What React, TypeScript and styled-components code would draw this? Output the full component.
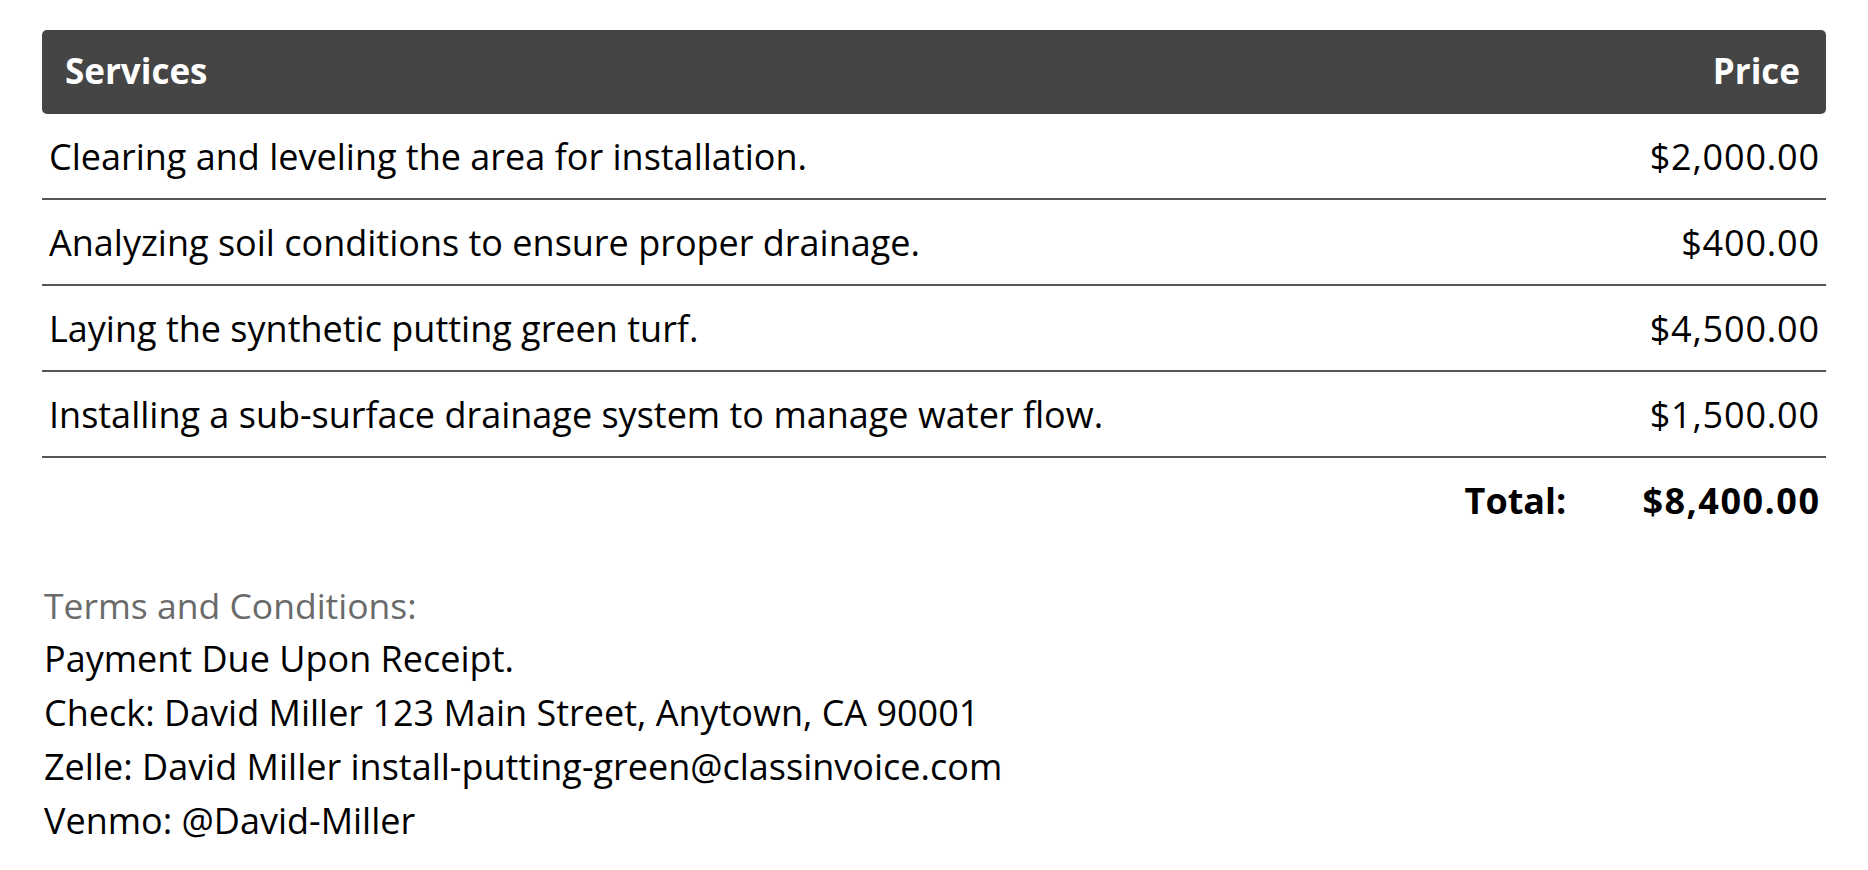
import React from "react";
import styled, { createGlobalStyle } from "styled-components";

const GlobalStyle = createGlobalStyle`
  html, body {
    margin: 0;
    padding: 0;
    background: #fff;
  }
  body {
    font-family: "Open Sans", "Noto Sans", sans-serif;
    color: #000;
  }
`;

interface ServiceItem {
  description: string;
  price: string;
}

const services: ServiceItem[] = [
  { description: "Clearing and leveling the area for installation.", price: "$2,000.00" },
  { description: "Analyzing soil conditions to ensure proper drainage.", price: "$400.00" },
  { description: "Laying the synthetic putting green turf.", price: "$4,500.00" },
  { description: "Installing a sub-surface drainage system to manage water flow.", price: "$1,500.00" },
];

const terms = [
  "Payment Due Upon Receipt.",
  "Check: David Miller 123 Main Street, Anytown, CA 90001",
  "Zelle: David Miller install-putting-green@classinvoice.com",
  "Venmo: @David-Miller",
];

export default function App() {
  return (
    <>
      <GlobalStyle />
      <Page>
        <Table>
          <HeaderRow>
            <HeaderCell>Services</HeaderCell>
            <HeaderCell>Price</HeaderCell>
          </HeaderRow>
          {services.map((s) => (
            <Row key={s.description}>
              <span>{s.description}</span>
              <Price>{s.price}</Price>
            </Row>
          ))}
          <TotalRow>
            <span>Total:</span>
            <TotalAmount>$8,400.00</TotalAmount>
          </TotalRow>
        </Table>
        <Terms>
          <TermsTitle>Terms and Conditions:</TermsTitle>
          {terms.map((t) => (
            <TermsLine key={t}>{t}</TermsLine>
          ))}
        </Terms>
      </Page>
    </>
  );
}

const Page = styled.div`
  padding: 30px 42px 0;
`;

const Table = styled.div`
  display: flex;
  flex-direction: column;
`;

const HeaderRow = styled.div`
  display: flex;
  justify-content: space-between;
  align-items: center;
  height: 84px;
  padding: 0 26px 0 23px;
  background: #454545;
  border-radius: 5px;
  color: #fff;
`;

const HeaderCell = styled.span`
  font-size: 35px;
  font-weight: 700;
  margin-top: -3px;
`;

const Row = styled.div`
  display: flex;
  justify-content: space-between;
  align-items: center;
  height: 84px;
  padding: 0 7px 0 7px;
  border-bottom: 2px solid #555;
  font-size: 36px;
`;

const Price = styled.span`
  letter-spacing: 0.8px;
  margin-right: -0.8px;
`;

const TotalRow = styled.div`
  display: flex;
  justify-content: flex-end;
  align-items: center;
  gap: 76px;
  height: 84px;
  padding: 0 7px;
  font-size: 36px;
  font-weight: 700;
`;

const TotalAmount = styled.span`
  letter-spacing: 1.5px;
  margin-right: -1.5px;
`;

const Terms = styled.div`
  margin-top: 36px;
  padding-left: 2px;
`;

const TermsTitle = styled.div`
  font-size: 35.5px;
  line-height: 54px;
  color: #6a6a6a;
`;

const TermsLine = styled.div`
  font-size: 36px;
  line-height: 54px;
`;
